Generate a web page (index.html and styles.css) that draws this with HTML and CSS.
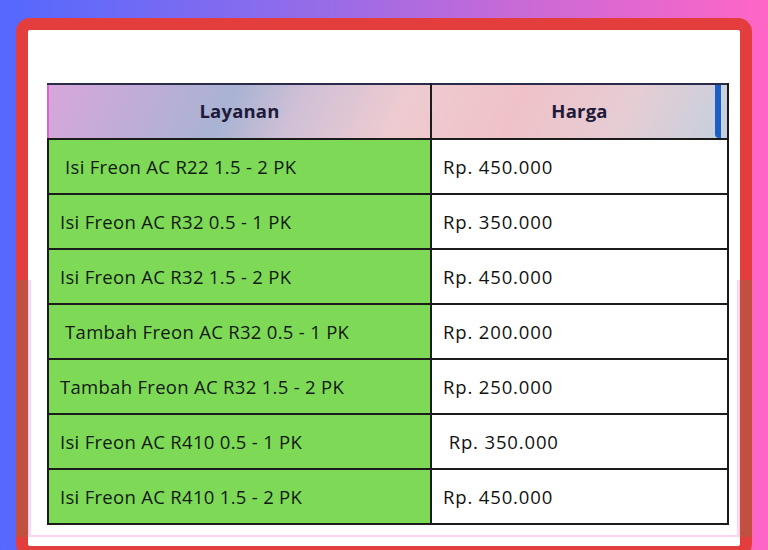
FILE: index.html
```html
<!DOCTYPE html>
<html lang="id">
<head>
<meta charset="utf-8">
<title>Harga Freon AC</title>
<link rel="stylesheet" href="styles.css">
</head>
<body>
<div class="frame">
  <table class="price-table">
    <thead>
      <tr>
        <th class="col-service">Layanan</th>
        <th class="col-price">Harga<span class="edge-bar"></span></th>
      </tr>
    </thead>
    <tbody>
      <tr><td class="service">&nbsp;Isi Freon AC R22 1.5 - 2 PK</td><td class="price">Rp. 450.000</td></tr>
      <tr><td class="service">Isi Freon AC R32 0.5 - 1 PK</td><td class="price">Rp. 350.000</td></tr>
      <tr><td class="service">Isi Freon AC R32 1.5 - 2 PK</td><td class="price">Rp. 450.000</td></tr>
      <tr><td class="service">&nbsp;Tambah Freon AC R32 0.5 - 1 PK</td><td class="price">Rp. 200.000</td></tr>
      <tr><td class="service">Tambah Freon AC R32 1.5 - 2 PK</td><td class="price">Rp. 250.000</td></tr>
      <tr><td class="service">Isi Freon AC R410 0.5 - 1 PK</td><td class="price">&nbsp;Rp. 350.000</td></tr>
      <tr><td class="service">Isi Freon AC R410 1.5 - 2 PK</td><td class="price">Rp. 450.000</td></tr>
    </tbody>
  </table>
</div>
<div class="ghost"></div>
</body>
</html>
```
FILE: styles.css
```css
html, body {
  margin: 0;
  padding: 0;
  height: 550px;
  overflow: hidden;
}
body {
  background: linear-gradient(90deg, #5468ff 0%, #8a6cec 35%, #c46ad8 65%, #ff66c6 100%);
  font-family: "Open Sans", "Lato", sans-serif;
  position: relative;
}
.frame {
  margin: 18px 0 0 16px;
  width: 736px;
  height: 540px;
  border: 12px solid #e43d3d;
  border-radius: 14px;
  background: #ffffff;
  padding: 53px 13px 0 19px;
  box-sizing: border-box;
}
.price-table {
  border-collapse: collapse;
  width: 680px;
  table-layout: fixed;
}
.price-table th,
.price-table td {
  border: 2px solid #1b1b1b;
  height: 55px;
  box-sizing: border-box;
  padding: 0;
  vertical-align: middle;
}
.col-service { width: 383px; }
.col-price { width: 297px; }
.price-table thead tr {
  background: linear-gradient(115deg, #d8a6da 0%, #b8afd6 18%, #a9b3d3 27%, #d0c0d6 37%, #eecbd0 52%, #efc2c8 68%, #e6cdd4 84%, #c3d0de 100%);
}
.price-table th {
  font-family: "Open Sans", "Inter", sans-serif;
  font-weight: 700;
  font-size: 18.5px;
  letter-spacing: 0.2px;
  color: #201a3a;
  text-align: center;
  position: relative;
  border-top-color: #2a2a4a;
  padding-bottom: 3px;
}
.price-table th.col-service {
  border-left-color: #e15fd3;
}
.edge-bar {
  position: absolute;
  right: 6px;
  top: 0;
  bottom: 0;
  width: 6px;
  background: #1c5fc4;
  border-radius: 0 0 0 4px;
}
.service,
.price {
  font-size: 18.5px;
  padding-left: 11px !important;
  padding-bottom: 1px !important;
  white-space: nowrap;
}
.service {
  background: #7ed957;
  color: #111a10;
  letter-spacing: 0.3px;
}
.price {
  background: #ffffff;
  color: #111111;
  letter-spacing: 0.85px;
}
.ghost {
  position: absolute;
  left: 16px;
  top: 280px;
  width: 736px;
  height: 257px;
  box-sizing: border-box;
  border-left: 12px solid #c1503e;
  border-right: 12px solid #c1503e;
  pointer-events: none;
}
.ghost::after {
  content: "";
  position: absolute;
  left: 0;
  right: 0;
  top: 0;
  bottom: 0;
  border-left: 3px solid #ffd4f4;
  border-right: 3px solid #ffd4f4;
  border-bottom: 2px solid #ffd4f4;
}
```
